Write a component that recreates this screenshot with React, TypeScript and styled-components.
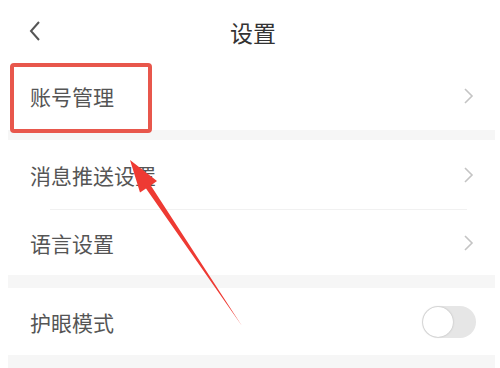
import React from "react";
import styled, { createGlobalStyle } from "styled-components";

const Global = createGlobalStyle`
  html, body { margin: 0; padding: 0; background: #ffffff; }
  body { font-family: "Noto Sans CJK SC", "Noto Sans", sans-serif; width: 500px; height: 368px; overflow: hidden; }
`;

const Page = styled.div`
  position: relative;
  width: 500px;
  height: 368px;
  background: #fff;
  overflow: hidden;
`;

const Header = styled.div`
  height: 62px;
  display: flex;
  align-items: center;
  justify-content: center;
  position: relative;
`;

const BackButton = styled.div`
  position: absolute;
  left: 26px;
  top: 20px;
  width: 20px;
  height: 22px;
  display: flex;
`;

const Title = styled.div`
  font-size: 23px;
  color: #333;
  letter-spacing: 0px;
  margin-left: 6px;
  margin-top: 2px;
`;

const Body = styled.div`
  margin: 0 5px 0 8px;
  display: flex;
  flex-direction: column;
`;

const Gap = styled.div<{ $h: number }>`
  height: ${(p) => p.$h}px;
  background: #f6f6f6;
`;

const Row = styled.div<{ $h: number; $divider?: boolean }>`
  height: ${(p) => p.$h}px;
  display: flex;
  align-items: center;
  justify-content: space-between;
  padding: 0 20px 0 22px;
  background: #fff;
  position: relative;
  ${(p) =>
    p.$divider
      ? `&::after { content: ""; position: absolute; left: 42px; right: 28px; bottom: 0; height: 1px; background: #f1f1f1; }`
      : ""}
`;

const Label = styled.span`
  font-size: 21px;
  color: #555;
`;

const Toggle = styled.div`
  width: 54px;
  height: 32px;
  border-radius: 16px;
  background: #e6e6e6;
  position: relative;
  margin-right: -1px;
`;

const Knob = styled.div`
  position: absolute;
  left: 1px;
  top: 1px;
  width: 30px;
  height: 30px;
  border-radius: 50%;
  background: #fff;
  box-shadow: 0 0 2px rgba(0, 0, 0, 0.25);
`;

const Highlight = styled.div`
  position: absolute;
  left: 10px;
  top: 63px;
  width: 134px;
  height: 62px;
  border: 4px solid #e8574c;
  border-radius: 4px;
`;

const ArrowSvg = styled.svg`
  position: absolute;
  left: 0;
  top: 0;
  pointer-events: none;
`;

const Chevron = () => (
  <svg width="12" height="18" viewBox="0 0 12 18">
    <path d="M2 2 L9 9 L2 16" fill="none" stroke="#c4c4c4" strokeWidth="1.6" />
  </svg>
);

export default function App() {
  return (
    <Page>
      <Global />
      <Header>
        <BackButton>
          <svg width="20" height="22" viewBox="0 0 20 22">
            <path d="M13 2 L5 11 L13 20" fill="none" stroke="#555" strokeWidth="2" />
          </svg>
        </BackButton>
        <Title>设置</Title>
      </Header>
      <Body>
        <Row $h={68}>
          <Label>账号管理</Label>
          <Chevron />
        </Row>
        <Gap $h={10} />
        <Row $h={70} $divider>
          <Label>消息推送设置</Label>
          <Chevron />
        </Row>
        <Row $h={65}>
          <Label>语言设置</Label>
          <Chevron />
        </Row>
        <Gap $h={13} />
        <Row $h={67}>
          <Label>护眼模式</Label>
          <Toggle>
            <Knob />
          </Toggle>
        </Row>
        <Gap $h={20} />
      </Body>
      <Highlight />
      <ArrowSvg width="500" height="368" viewBox="0 0 500 368">
        <polygon
          points="130,160 157,181 150.8,185.5 242,326 146,188.6 140,192.5"
          fill="#ee3a33"
        />
      </ArrowSvg>
    </Page>
  );
}
